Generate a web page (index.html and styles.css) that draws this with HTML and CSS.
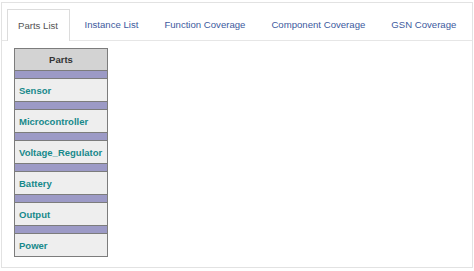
FILE: index.html
```html
<!DOCTYPE html>
<html>
<head>
<meta charset="utf-8">
<link rel="stylesheet" href="styles.css">
</head>
<body>
<div class="frame">
  <div class="tabs">
    <div class="tab active">Parts List</div>
    <div class="tab">Instance List</div>
    <div class="tab">Function Coverage</div>
    <div class="tab">Component Coverage</div>
    <div class="tab">GSN Coverage</div>
  </div>
  <div class="content">
    <table class="parts">
      <tr><th>Parts</th></tr>
      <tr class="strip"><td></td></tr>
      <tr><td>Sensor</td></tr>
      <tr class="strip"><td></td></tr>
      <tr><td>Microcontroller</td></tr>
      <tr class="strip"><td></td></tr>
      <tr><td>Voltage_Regulator</td></tr>
      <tr class="strip"><td></td></tr>
      <tr><td>Battery</td></tr>
      <tr class="strip"><td></td></tr>
      <tr><td>Output</td></tr>
      <tr class="strip"><td></td></tr>
      <tr><td>Power</td></tr>
    </table>
  </div>
</div>
</body>
</html>
```
FILE: styles.css
```css
html, body {
  margin: 0;
  padding: 0;
  background: #ffffff;
}
body {
  width: 474px;
  height: 271px;
  font-family: "Liberation Sans", Arial, sans-serif;
  overflow: hidden;
}
.frame {
  box-sizing: border-box;
  margin: 2px 0 0 1px;
  width: 472px;
  height: 266px;
  border: 1px solid #e2e2e2;
  background: #ffffff;
  padding-top: 6px;
}
.tabs {
  display: flex;
  align-items: flex-end;
  height: 31px;
  border-bottom: 1px solid #e6e6e6;
  padding-left: 5px;
}
.tab {
  box-sizing: border-box;
  height: 31px;
  line-height: 31px;
  padding: 0 12.5px;
  font-size: 9.6px;
  color: #3d5a9e;
  white-space: nowrap;
  margin-right: 1px;
}
.tab.active {
  color: #555555;
  border: 1px solid #dcdcdc;
  border-bottom: none;
  line-height: 31px;
  background: #ffffff;
  height: 32px;
  margin-bottom: -1px;
  margin-right: 2px;
  padding: 0 11px 0 10px;
}
.content {
  padding: 7px 0 0 12px;
}
.parts {
  border-collapse: collapse;
  width: 94px;
}
.parts th, .parts td {
  border: 1px solid #7c7c7c;
  padding: 0 0 0 4px;
  text-align: left;
}
.parts th {
  height: 21px;
  background: #d3d3d3;
  color: #333333;
  font-size: 9.5px;
  font-weight: bold;
  text-align: center;
  padding: 0;
}
.parts td {
  height: 22px;
  background: #eeeeee;
  color: #17898b;
  font-size: 9.5px;
  font-weight: bold;
}
.parts tr.strip td {
  height: 7px;
  background: #9c9ac6;
  padding: 0;
}
```
